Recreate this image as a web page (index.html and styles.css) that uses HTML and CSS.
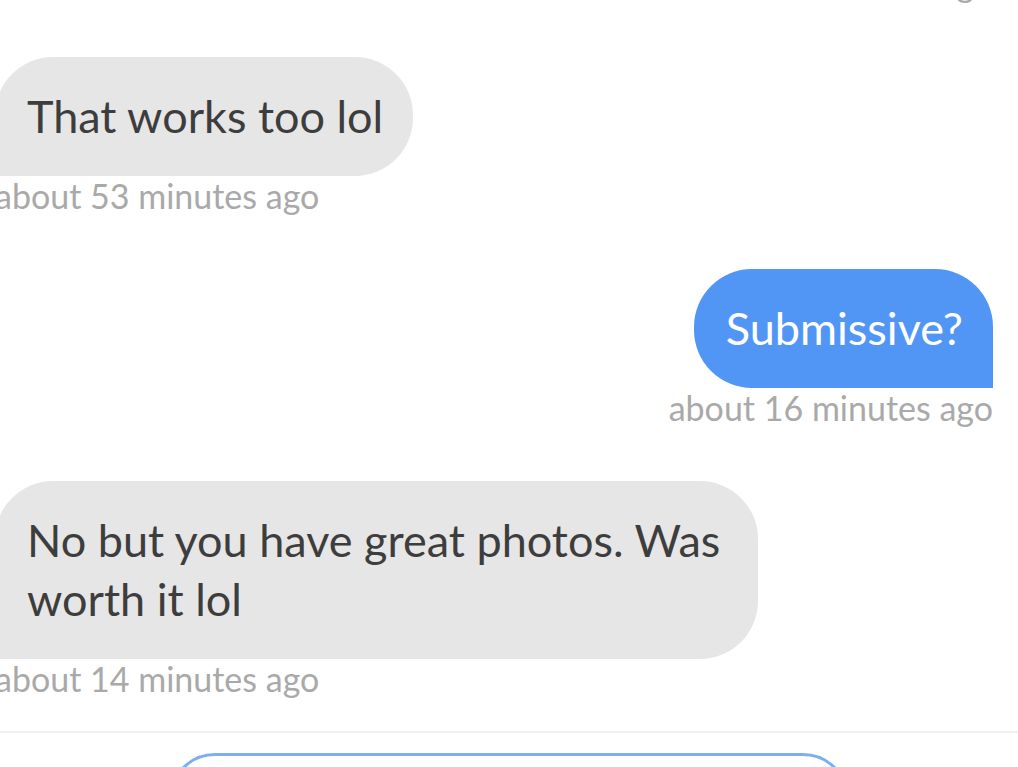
FILE: index.html
```html
<!DOCTYPE html>
<html lang="en">
<head>
    <meta charset="UTF-8">
    <meta name="viewport" content="width=device-width, initial-scale=1.0">
    <title>Messages</title>
    <link rel="stylesheet" href="styles.css">
</head>
<body>
    <div class="thread">
        <div class="message mine">
            <p class="meta">about 1 hour ago</p>
        </div>

        <div class="message theirs">
            <div class="bubble">That works too lol</div>
            <p class="meta">about 53 minutes ago</p>
        </div>

        <div class="message mine">
            <div class="bubble">Submissive?</div>
            <p class="meta">about 16 minutes ago</p>
        </div>

        <div class="message theirs">
            <div class="bubble">No but you have great photos. Was worth it lol</div>
            <p class="meta">about 14 minutes ago</p>
        </div>
    </div>

    <div class="composer">
        <div class="input-box"></div>
    </div>
</body>
</html>
```

FILE: styles.css
```css
html, body {
    margin: 0;
    height: 100%;
    overflow: hidden;
}
body {
    font-family: Lato, "Open Sans", sans-serif;
    background: #fff;
}
.thread {
    display: flex;
    flex-direction: column;
    margin: -36px 0 0 -5px;
    padding-right: 25px;
}
.message {
    display: flex;
    flex-direction: column;
    margin-bottom: 55px;
}
.message.theirs {
    align-items: flex-start;
}
.message.mine {
    align-items: flex-end;
}
.bubble {
    box-sizing: border-box;
    font-size: 45px;
    line-height: 59px;
    padding: 30px 30px 30px 32px;
    max-width: 763px;
}
.theirs .bubble {
    background: #e6e6e6;
    color: #3d3d3d;
    border-radius: 58px 58px 58px 0;
}
.mine .bubble {
    background: #5196f5;
    color: #fff;
    border-radius: 58px 58px 0 58px;
}
.meta {
    margin: 2px 0 0;
    font-size: 34px;
    line-height: 36px;
    color: #a9a9a9;
}
.message:last-child {
    margin-bottom: 34px;
}
.composer {
    border-top: 2px solid #f0f0f0;
    padding-top: 20px;
    display: flex;
    justify-content: center;
}
.input-box {
    width: 674px;
    height: 92px;
    border: 3px solid #7dafef;
    border-radius: 46px;
}
```
